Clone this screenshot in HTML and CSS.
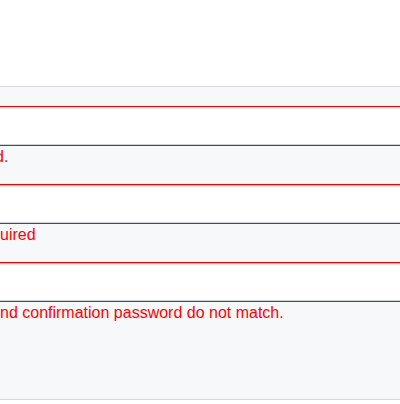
FILE: index.html
```html
<!DOCTYPE html>
<html lang="en">
<head>
<meta charset="utf-8">
<title>Form validation</title>
<link rel="stylesheet" href="styles.css">
</head>
<body>
  <div class="top-space"></div>
  <div class="form-table">
    <div class="err-row err-first"></div>
    <div class="field-row field-first"></div>
    <div class="err-row"><span class="msg msg-cut">d.</span></div>
    <div class="field-row"></div>
    <div class="err-row"><span class="msg">uired</span></div>
    <div class="field-row"></div>
    <div class="err-row err-last"><span class="msg">nd confirmation password do not match.</span></div>
  </div>
</body>
</html>
```

FILE: styles.css
```css
html, body {
  margin: 0;
  padding: 0;
  background: #ffffff;
}

body {
  width: 400px;
  height: 404px;
  overflow: hidden;
  font-family: "Liberation Sans", Arial, sans-serif;
  font-size: 16px;
}

.top-space {
  height: 86px;
}

.form-table {
  display: flex;
  flex-direction: column;
  border-top: 1px solid #d6d8dc;
}

.err-row {
  box-sizing: border-box;
  height: 40px;
  background: #f7f8fa;
  border-top: 1px solid #ff0000;
  border-bottom: 1px solid #ff0000;
  padding-top: 2px;
  color: #ff0000;
  white-space: nowrap;
  overflow: hidden;
}

.err-first {
  height: 20px;
  border-top: none;
  padding-top: 0;
}

.err-last {
  height: 99px;
  border-bottom: 1px solid #d6d8dc;
}

.field-row {
  box-sizing: border-box;
  height: 38px;
  background: #ffffff;
  border-top: 1px solid #cfd1d5;
  border-bottom: 1px solid #cfd1d5;
}

.field-first {
  height: 38px;
  border-top: none;
}

.msg {
  display: block;
  line-height: normal;
}

.msg-cut {
  text-indent: -5px;
}
```
